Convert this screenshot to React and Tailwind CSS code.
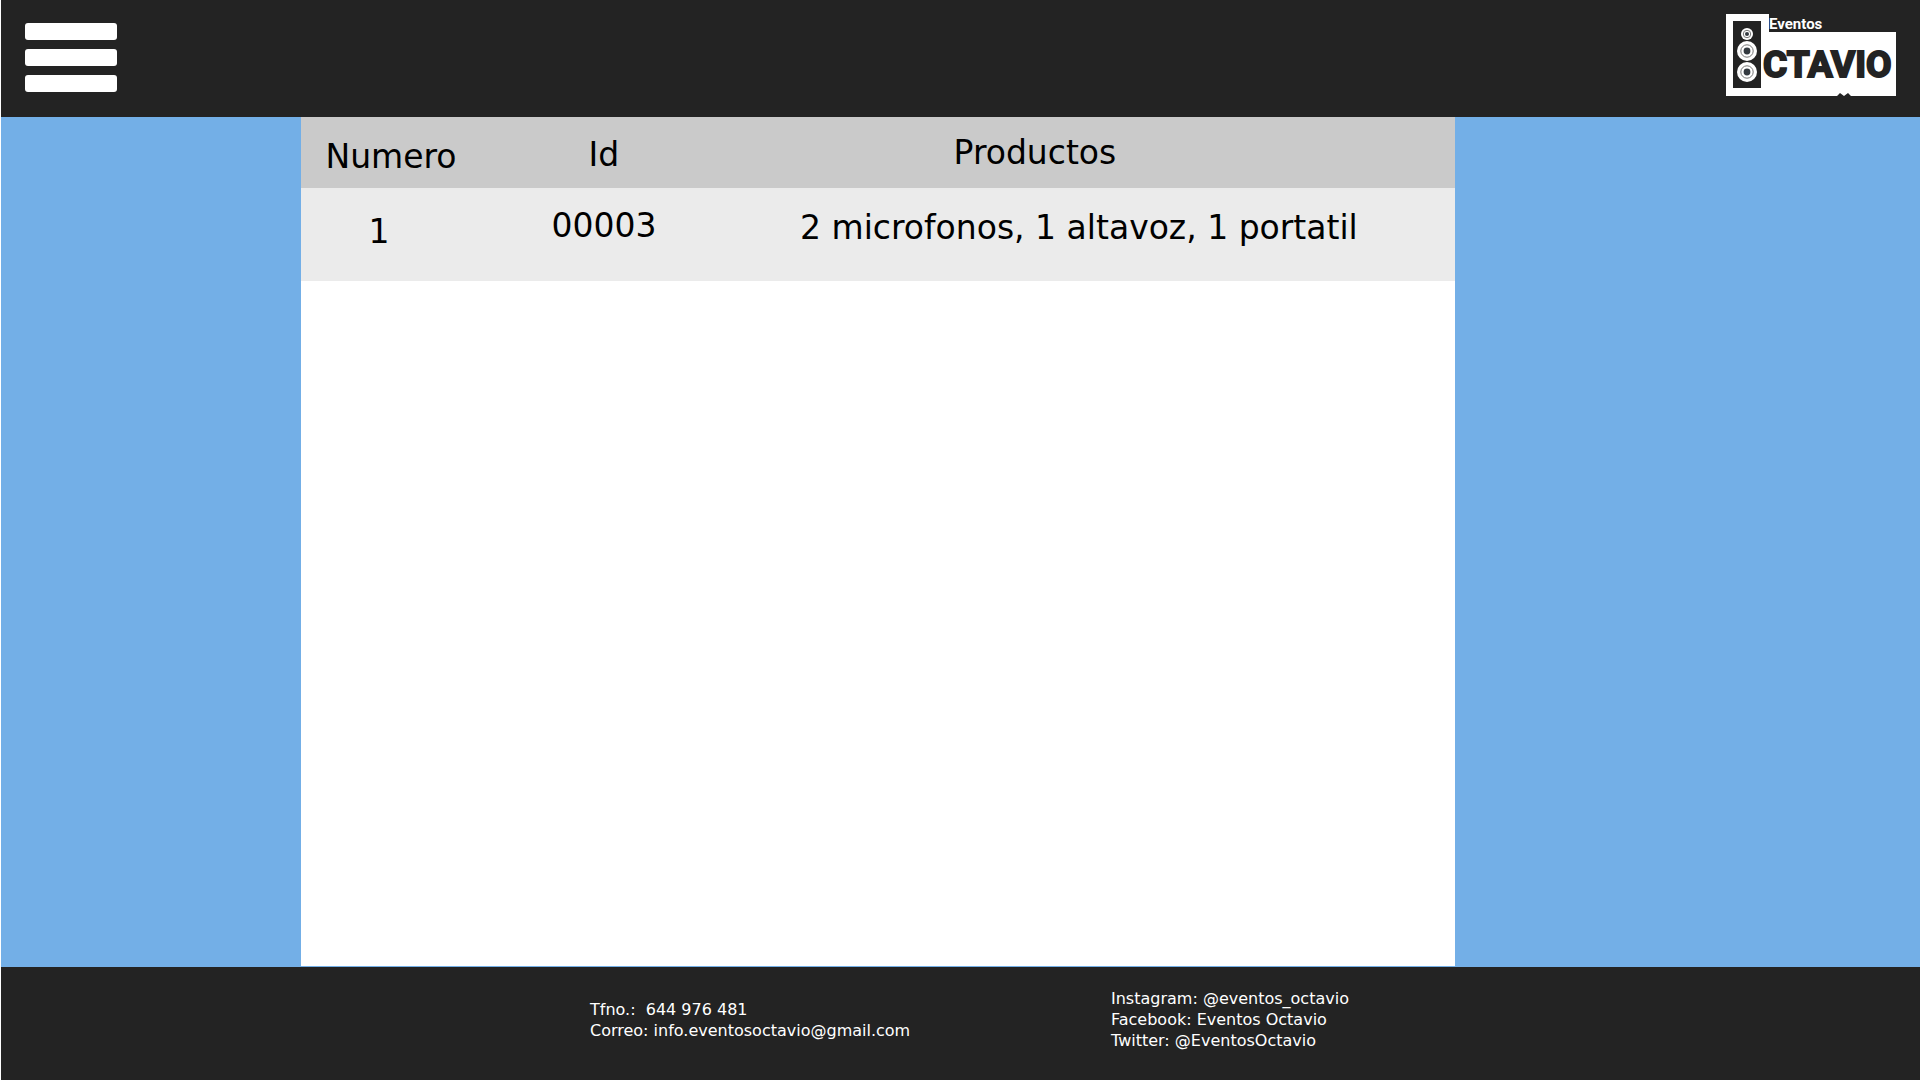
const rows = [
  { numero: '1', id: '00003', productos: '2 microfonos, 1 altavoz, 1 portatil' },
];

function Speaker({ cy, r }) {
  return (
    <g>
      <circle cx="21" cy={cy} r={r} fill="#fff" />
      <circle cx="21" cy={cy} r={r * 0.62} fill="none" stroke="#777" strokeWidth="1" />
      <circle cx="21" cy={cy} r={r * 0.34} fill="#343a40" />
    </g>
  );
}

function Logo() {
  return (
    <svg viewBox="0 0 170 84" className="h-21 w-[170px]" role="img" aria-label="Eventos Octavio">
      <path d="M0 1H43V19H170V83H125L122 80L118 83L114 80L111 83H0Z" fill="#fff" />
      <path d="M7 8H35V75H7Z" fill="#232323" />
      <Speaker cy={21} r={6} />
      <Speaker cy={38} r={10} />
      <Speaker cy={59} r={10} />
      <text x="43" y="16" fill="#fff" fontSize="15" fontWeight="700" fontFamily="Roboto, sans-serif">
        Eventos
      </text>
      <text x="37" y="64" fill="#232323" stroke="#232323" strokeWidth="2" fontSize="37" fontWeight="700" fontFamily="Roboto, sans-serif">
        CTAVIO
      </text>
    </svg>
  );
}

export default function App() {
  return (
    <div className="flex min-h-screen flex-col border-l border-white bg-[#73afe7] font-['DejaVu_Sans',sans-serif]">
      <header className="flex items-start justify-between bg-[#232323] pt-[13px] pr-6 pb-5 pl-6">
        <button type="button" aria-label="Menu" className="mt-[10px] flex w-[92px] flex-col gap-[9px]">
          <span className="h-[17px] w-full rounded-[3px] bg-white" />
          <span className="h-[17px] w-full rounded-[3px] bg-white" />
          <span className="h-[17px] w-full rounded-[3px] bg-white" />
        </button>
        <a href="#inicio">
          <Logo />
        </a>
      </header>

      <main className="grid grow grid-cols-[300fr_1154fr_465fr] pb-px">
        <section className="col-start-2 bg-white">
          <table className="w-full table-fixed text-center text-[33px] leading-10 text-black">
            <colgroup>
              <col className="w-[15.6%]" />
              <col className="w-[21.3%]" />
              <col />
            </colgroup>
            <thead className="bg-[#cacaca]">
              <tr className="h-[71px] align-top">
                <th scope="col" className="pt-5 font-normal">Numero</th>
                <th scope="col" className="pt-4.5 font-normal">Id</th>
                <th scope="col" className="pt-4 pr-28 font-normal">Productos</th>
              </tr>
            </thead>
            <tbody className="bg-[#ebebeb]">
              {rows.map((row) => (
                <tr key={row.id} className="h-[93px] align-top">
                  <td className="pt-6 pr-6">{row.numero}</td>
                  <td className="pt-4.5">{row.id}</td>
                  <td className="pt-5 pr-6">{row.productos}</td>
                </tr>
              ))}
            </tbody>
          </table>
        </section>
      </main>

      <footer className="grid min-h-[113px] grid-cols-[589fr_521fr_809fr] items-center bg-[#232323] pb-2 text-base leading-[21px] text-white">
        <address className="col-start-2 not-italic">
          <p className="whitespace-pre">Tfno.:  <a href="tel:644976481">644 976 481</a></p>
          <p>Correo: <a href="mailto:info.eventosoctavio@gmail.com">info.eventosoctavio@gmail.com</a></p>
        </address>
        <div>
          <p>Instagram: <a href="#instagram">@eventos_octavio</a></p>
          <p>Facebook: <a href="#facebook">Eventos Octavio</a></p>
          <p>Twitter: <a href="#twitter">@EventosOctavio</a></p>
        </div>
      </footer>
    </div>
  );
}
